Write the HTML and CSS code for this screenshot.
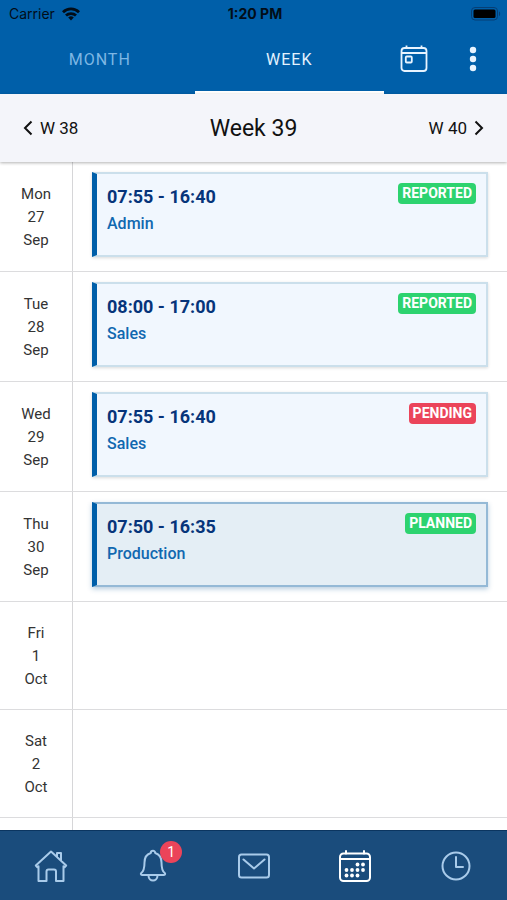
FILE: index.html
```html
<!DOCTYPE html>
<html lang="en">
<head>
<meta charset="utf-8">
<meta name="viewport" content="width=device-width, initial-scale=1">
<title>Week 39</title>
<link rel="stylesheet" href="styles.css">
</head>
<body>
<header class="top">
  <div class="status">
    <span class="carrier">Carrier
      <svg width="18" height="14" viewBox="0 0 18 14" aria-hidden="true"><g fill="none" stroke="currentColor" stroke-width="2.800"><path d="M1 5.200a11.400 11.400 0 0 1 16 0"/><path d="M4 8.600a7.200 7.200 0 0 1 10 0"/></g><path d="M6.200 10.600a4 4 0 0 1 5.600 0L9 13.600z" fill="currentColor"/></svg>
    </span>
    <span class="clock">1:20 PM</span>
    <svg class="battery" width="30" height="14" viewBox="0 0 30 14" aria-hidden="true"><rect x=".5" y=".5" width="26" height="12.500" rx="3.500" fill="none" stroke="#063f75"/><rect x="2.500" y="2.500" width="22" height="8.500" rx="1.500" fill="#000"/><path d="M28 4.500c1.500.5 1.500 4 0 4.500z" fill="#063f75"/></svg>
  </div>
  <div class="tabs">
    <button class="tab">MONTH</button>
    <button class="tab active">WEEK</button>
    <button class="tool" aria-label="Today">
      <svg width="28" height="28" viewBox="0 0 28 28" fill="none" stroke="currentColor" stroke-width="1.800"><rect x="1.500" y="3" width="25" height="23" rx="3"/><path d="M1.500 8h25M6.500.500V3M21.500.500V3"/><rect x="5.800" y="11.500" width="6" height="6" rx="1"/></svg>
    </button>
    <button class="tool" aria-label="More">
      <svg width="8" height="28" viewBox="0 0 8 28" fill="currentColor"><circle cx="4" cy="5" r="3.200"/><circle cx="4" cy="14" r="3.200"/><circle cx="4" cy="23" r="3.200"/></svg>
    </button>
  </div>
</header>
<div class="weekbar">
  <button class="step"><svg width="10" height="16" viewBox="0 0 10 16" aria-hidden="true"><path d="M8.500 1.500 2 8l6.500 6.500"/></svg>W 38</button>
  <h1>Week 39</h1>
  <button class="step next">W 40<svg width="10" height="16" viewBox="0 0 10 16" aria-hidden="true"><path d="M1.500 1.500 8 8l-6.500 6.500"/></svg></button>
</div>
<main class="days">
  <section class="row">
    <div class="date"><span>Mon</span><span>27</span><span>Sep</span></div>
    <div class="slot"><article class="shift"><div><h2>07:55 - 16:40</h2><p>Admin</p></div><span class="tag">REPORTED</span></article></div>
  </section>
  <section class="row">
    <div class="date"><span>Tue</span><span>28</span><span>Sep</span></div>
    <div class="slot"><article class="shift"><div><h2>08:00 - 17:00</h2><p>Sales</p></div><span class="tag">REPORTED</span></article></div>
  </section>
  <section class="row">
    <div class="date"><span>Wed</span><span>29</span><span>Sep</span></div>
    <div class="slot"><article class="shift"><div><h2>07:55 - 16:40</h2><p>Sales</p></div><span class="tag pending">PENDING</span></article></div>
  </section>
  <section class="row">
    <div class="date"><span>Thu</span><span>30</span><span>Sep</span></div>
    <div class="slot"><article class="shift current"><div><h2>07:50 - 16:35</h2><p>Production</p></div><span class="tag">PLANNED</span></article></div>
  </section>
  <section class="row">
    <div class="date"><span>Fri</span><span>1</span><span>Oct</span></div>
    <div class="slot"></div>
  </section>
  <section class="row">
    <div class="date"><span>Sat</span><span>2</span><span>Oct</span></div>
    <div class="slot"></div>
  </section>
  <section class="row">
    <div class="date"></div>
    <div class="slot"></div>
  </section>
</main>
<nav class="bottom">
  <a href="#home" aria-label="Home"><svg width="34" height="34" viewBox="0 0 34 34"><path d="M1.800 16.500 17 2.500l6 5.500V4h4v7.700l5.200 4.800-1.600 1.700-1.100-1V32H22v-9.500a2 2 0 0 0-2-2h-5.500a2 2 0 0 0-2 2V32H4.500V17.200l-1.100 1zM23 8l4 3.700"/></svg></a>
  <a href="#alerts" aria-label="Notifications"><span class="bell"><svg width="34" height="34" viewBox="0 0 34 34"><path d="M15.800 4a2.200 2.200 0 0 1 4.400 0c4 1.200 6.300 4.700 6.300 9.500 0 6 .5 8.500 3.200 10.500.8.800.5 2-.7 2H7c-1.200 0-1.500-1.200-.7-2 2.700-2 3.200-4.500 3.200-10.500 0-4.800 2.300-8.300 6.300-9.500zM13.500 26.500c0 6.500 9 6.500 9 0"/></svg><span class="count">1</span></span></a>
  <a href="#mail" aria-label="Messages"><svg width="34" height="34" viewBox="0 0 34 34"><rect x="2" y="5.500" width="30" height="23" rx="2.500"/><path d="m6.500 10.500 10.500 9 10.500-9"/></svg></a>
  <a href="#calendar" aria-label="Calendar" class="on"><svg width="34" height="34" viewBox="0 0 34 34"><rect x="2" y="4.500" width="30" height="27.500" rx="3.500"/><path d="M2 10h30M8 2v2.500M26 2v2.500"/><g fill="currentColor" stroke="none"><circle cx="19.500" cy="15.500" r="1.900"/><circle cx="25" cy="15.500" r="1.900"/><circle cx="8.500" cy="21" r="1.900"/><circle cx="14" cy="21" r="1.900"/><circle cx="19.500" cy="21" r="1.900"/><circle cx="25" cy="21" r="1.900"/><circle cx="8.500" cy="26.500" r="1.900"/><circle cx="14" cy="26.500" r="1.900"/><circle cx="19.500" cy="26.500" r="1.900"/></g></svg></a>
  <a href="#time" aria-label="Time"><svg width="34" height="34" viewBox="0 0 34 34"><circle cx="17" cy="17" r="13.500"/><path d="M17 8v10h7"/></svg></a>
</nav>
</body>
</html>
```
FILE: styles.css
```css
* { box-sizing: border-box; }
body {
  margin: 0;
  height: 100vh;
  display: flex;
  flex-direction: column;
  overflow: hidden;
  background: #fff;
  color: #333;
  font-family: Roboto, "Liberation Sans", sans-serif;
}
button {
  border: 0;
  padding: 0;
  background: none;
  font: inherit;
  color: inherit;
}
h1, h2, p { margin: 0; }
svg { display: block; }

.top { flex: none; background: #005fa9; color: #fff; }
.status {
  display: grid;
  grid-template-columns: 1fr auto 1fr;
  align-items: center;
  height: 27px;
  padding: 0 6px 0 9px;
  color: #020d18;
  font: 14px/27px Inter, "Liberation Sans", sans-serif;
}
.carrier { display: flex; align-items: center; gap: 7px; }
.clock { font-weight: 700; }
.battery { justify-self: end; }
.tabs { display: flex; height: 67px; padding: 0 5px; }
.tab {
  flex: 1;
  border-bottom: 3px solid transparent;
  color: #7db7e4;
  font-size: 16px;
  letter-spacing: 1px;
}
.tab.active { color: #e3f2ff; border-color: #fff; }
.tool {
  width: 59px;
  display: grid;
  place-items: center;
  padding-bottom: 3px;
  color: #e8f4ff;
}

.weekbar {
  position: relative;
  flex: none;
  display: grid;
  grid-template-columns: 1fr auto 1fr;
  align-items: center;
  height: 68px;
  padding: 0 23px;
  background: #f4f5fa;
  color: #111;
  box-shadow: 0 1px 3px #0000004d;
}
.weekbar h1 { font-size: 23px; font-weight: 400; }
.step { display: flex; align-items: center; gap: 7px; font-size: 17px; }
.next { justify-self: end; }
.step svg { fill: none; stroke: currentColor; stroke-width: 2; }

.days { flex: 1; min-height: 0; overflow: hidden; }
.row { display: flex; min-height: 108px; border-bottom: 1px solid #dcdcde; }
.date {
  width: 73px;
  padding-top: 2px;
  display: flex;
  flex-direction: column;
  justify-content: center;
  border-right: 1px solid #d6d6d8;
  text-align: center;
  font-size: 15px;
  line-height: 23px;
}
.slot { flex: 1; }
.shift {
  display: flex;
  justify-content: space-between;
  align-items: flex-start;
  height: 85px;
  margin: 10px 19px 14px;
  padding: 9px 10px;
  border: 2px solid #cbdfeb;
  border-left: 5px solid #005fa9;
  background: #f1f7fe;
  box-shadow: 0 1px 3px #00000026;
}
.shift.current {
  border-color: #94b9d6;
  border-left-color: #005fa9;
  background: #e4eef5;
  box-shadow: 0 2px 5px #2a6da055;
}
.shift h2 { color: #06347a; font-size: 18px; line-height: 28px; font-weight: 700; }
.shift p { color: #1068b0; font-size: 16px; line-height: 26px; font-weight: 500; }
.tag {
  padding: 0 4px;
  border-radius: 4px;
  background: #2dd36f;
  color: #fff;
  font-size: 14px;
  line-height: 21px;
  font-weight: 700;
}
.tag.pending { background: #eb445a; }

.bottom {
  flex: none;
  display: flex;
  height: 70px;
  border-top: 1px solid #0b3560;
  background: #1a4c7c;
}
.bottom a { flex: 1; display: grid; place-items: center; color: #a9cbea; }
.bottom .on { color: #fff; }
.bottom svg { fill: none; stroke: currentColor; stroke-width: 2; stroke-linejoin: round; stroke-linecap: round; }
.bell { position: relative; }
.count {
  position: absolute;
  top: -8px;
  right: -13px;
  width: 22px;
  border-radius: 50%;
  background: #eb445a;
  color: #fff;
  font-size: 14px;
  line-height: 22px;
  text-align: center;
}
```
